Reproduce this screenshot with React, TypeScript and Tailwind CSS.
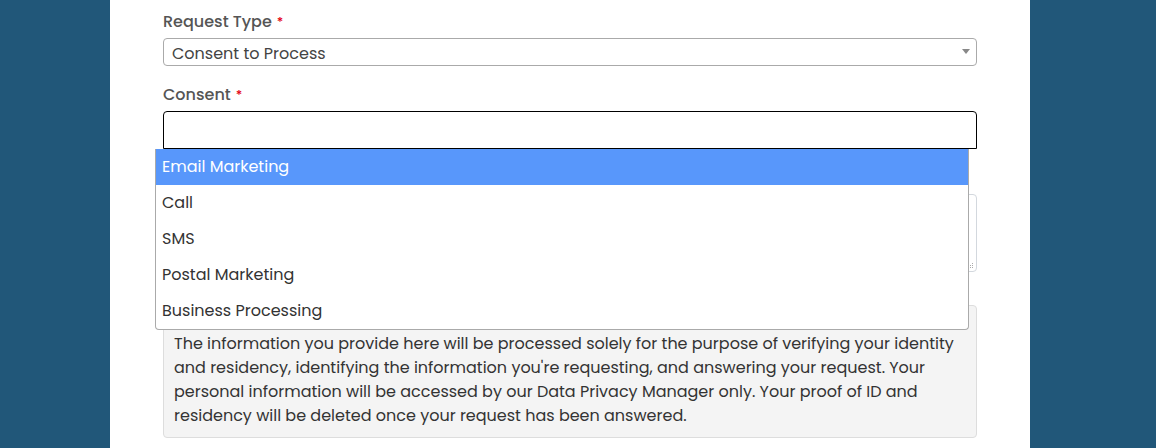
import React from 'react';

const options = ['Email Marketing', 'Call', 'SMS', 'Postal Marketing', 'Business Processing'];

const note = [
  'The information you provide here will be processed solely for the purpose of verifying your identity',
  "and residency, identifying the information you're requesting, and answering your request. Your",
  'personal information will be accessed by our Data Privacy Manager only. Your proof of ID and',
  'residency will be deleted once your request has been answered.',
];

function Label({ text }: { text: string }) {
  return (
    <label className="flex items-center h-[24px] pt-[2px] text-[16px] font-medium text-[#555] mb-[5px]">
      {text}
      <span className="text-[#e3000f] text-[13px] ml-[5px]">*</span>
    </label>
  );
}

export default function App() {
  return (
    <div className="h-[448px] overflow-hidden bg-[#215779] font-['Poppins','Noto_Sans',sans-serif]">
      <div className="ml-[110px] w-[920px] h-full bg-white px-[53px] pt-[9px]">
        {/* Request type */}
        <Label text="Request Type" />
        <div className="relative h-[28px] border border-[#aaa] rounded-[4px] flex items-center pl-[8px] pt-[3px]">
          <span className="text-[16px] text-[#444]">Consent to Process</span>
          <span className="absolute right-[6px] top-[10px] w-0 h-0 border-l-[4px] border-r-[4px] border-t-[5px] border-l-transparent border-r-transparent border-t-[#888]" />
        </div>

        {/* Consent multiselect */}
        <div className="mt-[16px]">
          <Label text="Consent" />
          <div className="relative">
            <div className="h-[38px] border border-black rounded-t-[4px] bg-white" />
            <ul className="absolute z-10 left-[-8px] top-[38px] w-[814px] bg-white border border-[#aaa] border-t-0 rounded-b-[4px] text-[16px] text-[#333]">
              {options.map((o, i) => (
                <li
                  key={o}
                  className={
                    'h-[36px] flex items-center pl-[6px] ' +
                    (i === 0 ? 'bg-[#5897fb] text-white' : '')
                  }
                >
                  {o}
                </li>
              ))}
            </ul>
          </div>
        </div>

        {/* Details textarea (label row hidden under the open dropdown) */}
        <div className="mt-[16px]">
          <div className="h-[24px] mb-[5px]" />
          <div className="relative h-[78px] border border-[#d3d8de] rounded-[4px]">
            <svg className="absolute right-[2px] bottom-[2px]" width="6" height="6" viewBox="0 0 6 6">
              <g fill="#aaa">
                <rect x="4" y="0" width="1" height="1" />
                <rect x="2" y="2" width="1" height="1" />
                <rect x="4" y="2" width="1" height="1" />
                <rect x="0" y="4" width="1" height="1" />
                <rect x="2" y="4" width="1" height="1" />
                <rect x="4" y="4" width="1" height="1" />
              </g>
            </svg>
          </div>
        </div>

        {/* Privacy note */}
        <div className="mt-[33px] h-[133px] bg-[#f4f4f4] border border-[#ddd] rounded-[4px] pl-[10px] pt-[26px] text-[16px] leading-6 text-[#333]">
          {note.map((l) => (
            <div key={l} className="whitespace-nowrap">
              {l}
            </div>
          ))}
        </div>
      </div>
    </div>
  );
}
